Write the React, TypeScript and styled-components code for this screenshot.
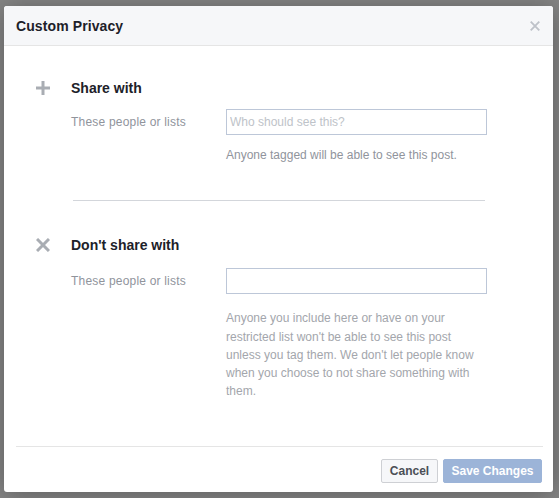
import React from 'react'
import styled, { createGlobalStyle } from 'styled-components'

const GlobalStyle = createGlobalStyle`
    html, body {
        margin: 0;
        padding: 0;
        background: #858585;
    }
    body {
        font-family: "Liberation Sans", Arial, Helvetica, sans-serif;
        -webkit-font-smoothing: antialiased;
    }
`

const Backdrop = styled.div`
    width: 559px;
    height: 498px;
    box-sizing: border-box;
    padding: 6px 6px 6px 4px;
    background: #858585;
    overflow: hidden;
`

const Dialog = styled.div`
    width: 549px;
    height: 486px;
    background: #fff;
    border-radius: 3px;
    box-shadow: 0 2px 26px rgba(0, 0, 0, 0.3);
    display: flex;
    flex-direction: column;
    overflow: hidden;
`

const Header = styled.div`
    height: 39px;
    background: #f6f7f9;
    border-bottom: 1px solid #e5e5e5;
    display: flex;
    align-items: center;
    justify-content: space-between;
    padding: 0 10px 0 12px;
`

const Title = styled.h3`
    margin: 2px 0 0;
    font-size: 14px;
    font-weight: bold;
    color: #1d2129;
    line-height: 19px;
    letter-spacing: 0.1px;
`

const CloseButton = styled.button`
    border: 0;
    background: none;
    padding: 0;
    margin-top: 1px;
    width: 16px;
    height: 16px;
    display: flex;
    align-items: center;
    justify-content: center;
    cursor: pointer;
`

const Body = styled.div`
    flex: 1;
    padding: 33px 0 0 32px;
`

const Section = styled.div`
    display: flex;
`

const IconCol = styled.div`
    width: 35px;
    height: 18px;
    display: flex;
    align-items: center;
`

const Content = styled.div`
    display: flex;
    flex-direction: column;
`

const Heading = styled.div`
    font-size: 14px;
    font-weight: bold;
    color: #1d2129;
    line-height: 18px;
`

const Row = styled.div<{ $top: number }>`
    display: grid;
    grid-template-columns: 155px 261px;
    align-items: center;
    margin-top: ${p => p.$top}px;
`

const Label = styled.label`
    font-size: 12px;
    color: #90949c;
    line-height: 18px;
    letter-spacing: 0.2px;
`

const Input = styled.input`
    box-sizing: border-box;
    width: 261px;
    height: 26px;
    border: 1px solid #bdc7d8;
    padding: 3px 3px 4px;
    font-family: inherit;
    font-size: 12px;
    color: #1d2129;
    outline: none;
    &::placeholder {
        color: #bec3c9;
    }
`

const Help = styled.p<{ $top: number; $light?: boolean }>`
    margin: ${p => p.$top}px 0 0 155px;
    width: 261px;
    font-size: 12px;
    line-height: 18.3px;
    color: ${p => (p.$light ? '#a3a6ac' : '#90949c')};
`

const Divider = styled.hr`
    border: 0;
    border-top: 1px solid #d3d6db;
    margin: 36px 0 35px 37px;
    width: 412px;
`

const Footer = styled.div`
    margin: 0 10px 0 12px;
    border-top: 1px solid #e5e5e5;
    padding: 12px 0 9px;
    display: flex;
    justify-content: flex-end;
    gap: 5px;
`

const Button = styled.button<{ $primary?: boolean }>`
    box-sizing: border-box;
    height: 24px;
    width: ${p => (p.$primary ? 99 : 57)}px;
    padding: 0;
    margin-right: ${p => (p.$primary ? 1 : 0)}px;
    border-radius: 2px;
    font-family: inherit;
    font-size: 12px;
    font-weight: bold;
    line-height: 22px;
    border: 1px solid ${p => (p.$primary ? '#9cb4d8' : '#ced0d4')};
    background: ${p => (p.$primary ? '#9cb4d8' : '#f6f7f9')};
    color: ${p => (p.$primary ? '#fff' : '#4b4f56')};
    cursor: pointer;
`

const PlusIcon = () => (
    <svg width="14" height="14" viewBox="0 0 14 14">
        <path d="M7 0v14M0 7h14" stroke="#a9adb3" strokeWidth="3" />
    </svg>
)

const CrossIcon = ({ size, color, width }: { size: number; color: string; width: number }) => (
    <svg width={size} height={size} viewBox="0 0 14 14">
        <path d="M1 1l12 12M13 1L1 13" stroke={color} strokeWidth={width} />
    </svg>
)

export default function App() {
    return (
        <>
            <GlobalStyle />
            <Backdrop>
                <Dialog>
                    <Header>
                        <Title>Custom Privacy</Title>
                        <CloseButton aria-label="Close">
                            <CrossIcon size={10} color="#bec2c9" width={2.6} />
                        </CloseButton>
                    </Header>
                    <Body>
                        <Section>
                            <IconCol><PlusIcon /></IconCol>
                            <Content>
                                <Heading>Share with</Heading>
                                <Row $top={12}>
                                    <Label>These people or lists</Label>
                                    <Input placeholder="Who should see this?" />
                                </Row>
                                <Help $top={11}>Anyone tagged will be able to see this post.</Help>
                            </Content>
                        </Section>
                        <Divider />
                        <Section>
                            <IconCol><CrossIcon size={14} color="#a9adb3" width={3} /></IconCol>
                            <Content>
                                <Heading>Don't share with</Heading>
                                <Row $top={14}>
                                    <Label>These people or lists</Label>
                                    <Input />
                                </Row>
                                <Help $top={15} $light>
                                    Anyone you include here or have on your restricted list won't be able to see this post unless you tag them. We don't let people know when you choose to not share something with them.
                                </Help>
                            </Content>
                        </Section>
                    </Body>
                    <Footer>
                        <Button>Cancel</Button>
                        <Button $primary>Save Changes</Button>
                    </Footer>
                </Dialog>
            </Backdrop>
        </>
    )
}
